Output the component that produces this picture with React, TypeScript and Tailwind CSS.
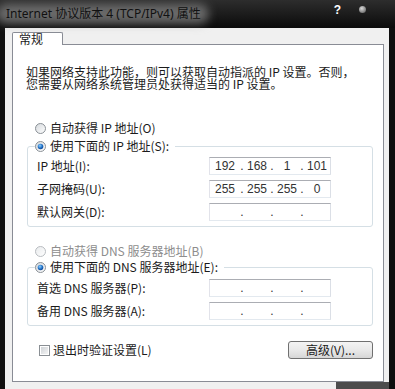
import React from "react";

function Radio({ checked, disabled }: { checked?: boolean; disabled?: boolean }) {
  const id = checked ? "rc" : disabled ? "rd" : "ru";
  return (
    <svg width="11" height="11" viewBox="0 0 11 11" className="shrink-0">
      <defs>
        <linearGradient id={id + "g"} x1="0" y1="0" x2="1" y2="1">
          <stop offset="0" stopColor={disabled ? "#e8eaec" : "#d4d8dc"} />
          <stop offset="1" stopColor="#ffffff" />
        </linearGradient>
        <radialGradient id={id + "d"} cx="0.4" cy="0.35" r="0.7">
          <stop offset="0" stopColor="#8fd0ff" />
          <stop offset="0.6" stopColor="#1f6fc4" />
          <stop offset="1" stopColor="#0c3f8c" />
        </radialGradient>
      </defs>
      <circle cx="5.5" cy="5.5" r="5" fill={`url(#${id}g)`} stroke={disabled ? "#b8bcc0" : "#8a9096"} strokeWidth="1" />
      {checked && <circle cx="5.5" cy="5.5" r="2.8" fill={`url(#${id}d)`} />}
    </svg>
  );
}

function Check() {
  return (
    <svg width="11" height="11" viewBox="0 0 11 11" className="shrink-0">
      <defs>
        <linearGradient id="cbg" x1="0" y1="0" x2="1" y2="1">
          <stop offset="0" stopColor="#cfd3d7" />
          <stop offset="1" stopColor="#f4f4f4" />
        </linearGradient>
      </defs>
      <rect x="0.5" y="0.5" width="10" height="10" fill="#fff" stroke="#8a8f94" />
      <rect x="2" y="2" width="7" height="7" fill="url(#cbg)" />
    </svg>
  );
}

function IpBox({ parts }: { parts?: string[] }) {
  const p = parts ?? ["", "", "", ""];
  return (
    <div className="flex h-[18px] items-center border border-[#abadb3] border-b-[#e3e9ef] border-l-[#e2e3ea] border-r-[#dbdfe6] bg-white font-['Liberation_Sans',sans-serif] text-[12px] text-[#333]">
      {p.map((v, i) => (
        <div key={i} className="flex w-[30px] items-center">
          {i > 0 && <span className="w-[4px] text-center leading-none">.</span>}
          <span className="flex-1 text-center leading-none">{v}</span>
        </div>
      ))}
    </div>
  );
}

function Row({ label, parts }: { label: string; parts?: string[] }) {
  return (
    <div className="flex h-[18px] items-center">
      <span className="w-[172px] leading-none">{label}</span>
      <IpBox parts={parts} />
    </div>
  );
}

function Group({ legend, children }: { legend: string; children: React.ReactNode }) {
  return (
    <div className="flex flex-col">
      <div className="relative z-10 ml-[8px] flex h-[16px] w-fit items-center gap-[4px] bg-white pr-[6px]">
        <Radio checked />
        <span className="leading-none">{legend}</span>
      </div>
      <div className="-mt-[8px] flex flex-col gap-[5px] rounded-[3px] border border-[#d5dfe5] pb-[5px] pl-[9px]">
        {children}
      </div>
    </div>
  );
}

export default function App() {
  return (
    <div className="relative flex h-[389px] w-[395px] flex-col overflow-hidden bg-[#0e0e0e] font-['Noto_Sans_CJK_SC',sans-serif] text-[12px] text-[#1b1b1b]">
      {/* title bar */}
      <div className="flex h-[28px] shrink-0 bg-gradient-to-b from-[#2d2d2d] via-[#1c1c1c] to-[#0b0b0b]">
        <div className="relative ml-[6px] flex items-center">
          <div className="absolute -left-[10px] -right-[8px] top-[4px] bottom-[4px] rounded-[10px] bg-[#9c9c9c]/60 blur-[5px]" />
          <span className="relative font-['Noto_Sans','Noto_Sans_CJK_SC',sans-serif] text-[12px] leading-none text-[#111]">
            Internet 协议版本 4 (TCP/IPv4) 属性
          </span>
        </div>
        <div className="flex-1" />
        <div className="flex h-[19px] items-center gap-[18px] pr-[29px]">
          <span className="font-['Liberation_Sans',sans-serif] text-[12px] font-bold leading-none text-white">?</span>
          <span className="h-[7px] w-[7px] rounded-full bg-[radial-gradient(circle_at_40%_35%,#d8d8d8,#7a7a7a_70%,#444)]" />
        </div>
      </div>

      <div className="flex min-h-0 flex-1">
        <div className="w-[5px] shrink-0 bg-[#101010]" />
        <div className="flex flex-1 flex-col bg-[#f0f0f0] pl-[7px] pr-[5px] pt-[4px]">
          {/* tab */}
          <div className="relative z-10 -mb-px flex h-[21px] w-[51px] items-center rounded-t-[2px] border border-b-0 border-[#898c95] bg-white pl-[6px]">
            <span className="leading-none">常规</span>
          </div>
          {/* panel */}
          <div className="flex flex-col border border-[#898c95] bg-white pb-[22px] pl-[14px] pr-[10px]">
            <div className="-ml-px mt-[21px] flex flex-col whitespace-nowrap">
              <span className="h-[12px] leading-[12px]">如果网络支持此功能，则可以获取自动指派的 IP 设置。否则，</span>
              <span className="h-[12px] leading-[12px]">您需要从网络系统管理员处获得适当的 IP 设置。</span>
            </div>

            <div className="ml-[8px] mt-[30px] flex h-[16px] items-center gap-[4px]">
              <Radio />
              <span className="leading-none">自动获得 IP 地址(O)</span>
            </div>

            <div className="mt-[2px]">
              <Group legend="使用下面的 IP 地址(S):">
                <div className="h-[5px]" />
                <Row label="IP 地址(I):" parts={["192", "168", "1", "101"]} />
                <Row label="子网掩码(U):" parts={["255", "255", "255", "0"]} />
                <Row label="默认网关(D):" />
              </Group>
            </div>

            <div className="ml-[8px] mt-[16px] flex h-[16px] items-center gap-[4px] text-[#8d8d8d]">
              <Radio disabled />
              <span className="leading-none">自动获得 DNS 服务器地址(B)</span>
            </div>

            <div>
              <Group legend="使用下面的 DNS 服务器地址(E):">
                <div className="h-[6px]" />
                <Row label="首选 DNS 服务器(P):" />
                <Row label="备用 DNS 服务器(A):" />
              </Group>
            </div>

            <div className="mt-[15px] flex h-[18px] items-center justify-between">
              <div className="ml-[12px] flex items-center gap-[3px]">
                <Check />
                <span className="leading-none">退出时验证设置(L)</span>
              </div>
              <button className="flex h-[18px] w-[85px] items-center justify-center rounded-[3px] border border-[#707070] bg-gradient-to-b from-[#f4f4f4] via-[#e9e9e9] to-[#d6d6d6] leading-none">
                高级(V)...
              </button>
            </div>
          </div>

          {/* bottom buttons */}
          <div className="-mr-[2px] mt-[7px] flex justify-end gap-[9px]">
            <div className="h-[22px] w-[70px] shrink-0 rounded-[3px] border border-[#3c7fb1] bg-gradient-to-b from-[#eaf6fd] to-[#bee6fd]" />
            <div className="h-[22px] w-[70px] shrink-0 rounded-[3px] border border-[#707070] bg-gradient-to-b from-[#f2f2f2] to-[#dcdcdc]" />
          </div>
        </div>
        <div className="w-[6px] shrink-0 bg-[#0e0e0e]" />
      </div>

      <div className="absolute left-[336px] top-[382px] h-[7px] w-[53px] bg-[#4c4c4c]" />
    </div>
  );
}
